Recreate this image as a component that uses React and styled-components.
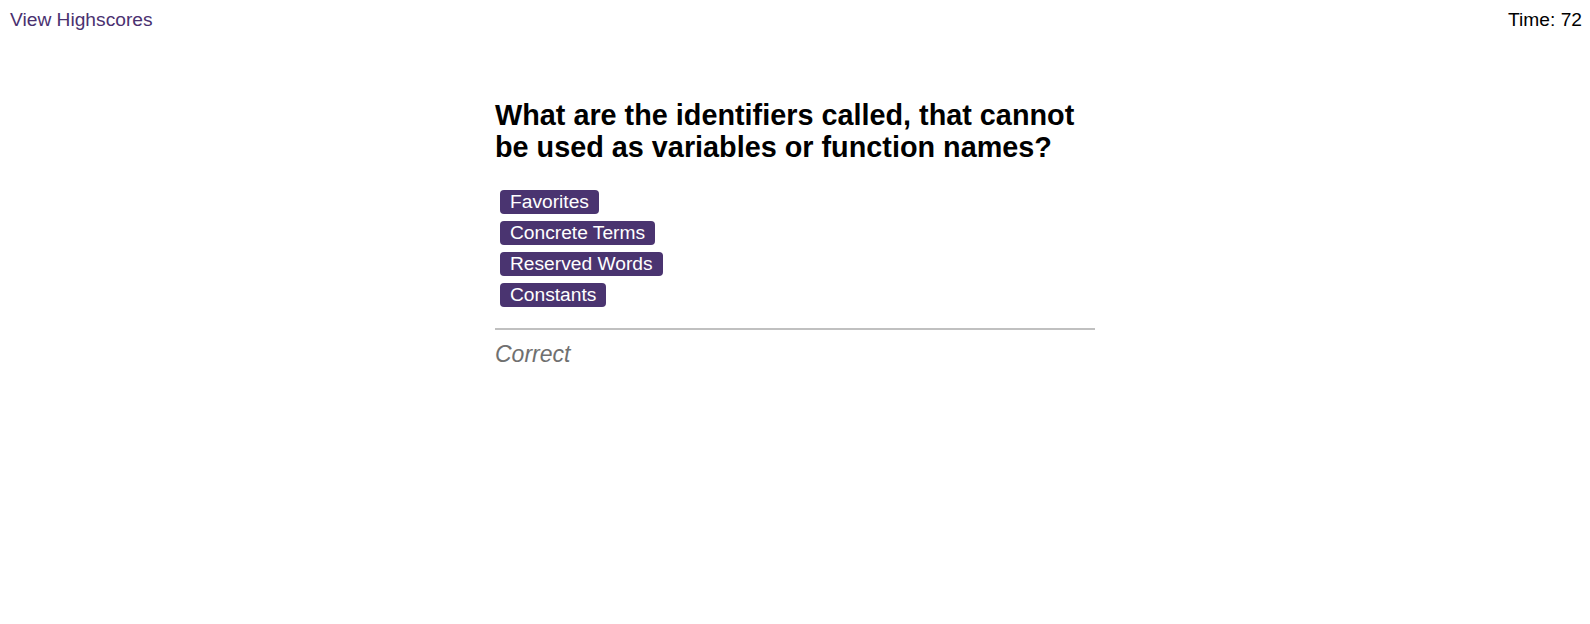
import React from 'react';
import styled, { createGlobalStyle } from 'styled-components';

const GlobalStyle = createGlobalStyle`
  body {
    margin: 0;
    font-family: "Liberation Sans", Arial, sans-serif;
    background: #fff;
    color: #000;
  }
`;

const TopBar = styled.header`
  display: flex;
  justify-content: space-between;
  align-items: center;
  padding: 9px 8px 0 10px;
  font-size: 19.2px;
`;

const HighscoresLink = styled.a`
  color: #4a3170;
  text-decoration: none;
  cursor: pointer;
`;

const Timer = styled.span`
  color: #000;
`;

const QuizCard = styled.main`
  width: 600px;
  margin: 68px auto 0;
`;

const Question = styled.h2`
  font-size: 28.8px;
  line-height: 32px;
  font-weight: bold;
  margin: 0 0 27px;
`;

const Choices = styled.div`
  display: flex;
  flex-direction: column;
  align-items: flex-start;
  gap: 7px;
  padding-left: 5px;
`;

const ChoiceButton = styled.button`
  font-family: inherit;
  font-size: 19.2px;
  line-height: 22px;
  padding: 1px 10px;
  border: none;
  border-radius: 4px;
  background-color: #4a3470;
  color: #fff;
  cursor: pointer;

  &:hover {
    background-color: #6a4c96;
  }
`;

const Divider = styled.hr`
  border: none;
  border-top: 2px solid #c0c0c0;
  margin: 21px 0 11px;
`;

const Feedback = styled.p`
  margin: 0;
  font-size: 23px;
  font-style: italic;
  color: #707070;
`;

const choices = ['Favorites', 'Concrete Terms', 'Reserved Words', 'Constants'];

export default function App() {
  return (
    <>
      <GlobalStyle />
      <TopBar>
        <HighscoresLink>View Highscores</HighscoresLink>
        <Timer>Time: 72</Timer>
      </TopBar>
      <QuizCard>
        <Question>
          What are the identifiers called, that cannot be used as variables or function names?
        </Question>
        <Choices>
          {choices.map((c) => (
            <ChoiceButton key={c}>{c}</ChoiceButton>
          ))}
        </Choices>
        <Divider />
        <Feedback>Correct</Feedback>
      </QuizCard>
    </>
  );
}
